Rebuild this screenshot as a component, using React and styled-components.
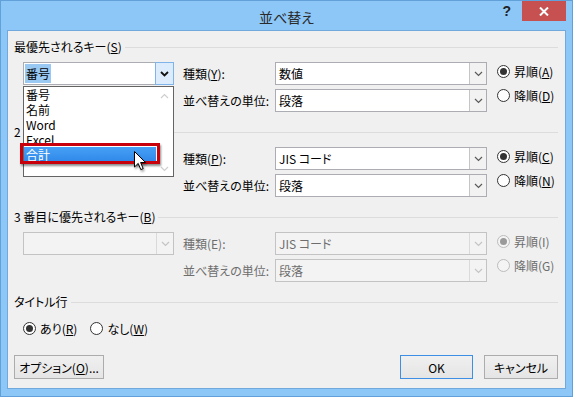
import React from 'react';
import styled, { createGlobalStyle } from 'styled-components';

const GlobalStyle = createGlobalStyle`
    html, body {
        margin: 0;
        padding: 0;
        background: #ffffff;
    }
    body {
        font-family: "Noto Sans CJK JP", "Noto Sans", sans-serif;
        font-feature-settings: "palt";
        color: #000;
    }
`;

const Chevron = ({ color = '#444', up = false, width = 1.4 }) => (
    <svg width="9" height="6" viewBox="0 0 9 6">
        <path
            d={up ? 'M1 5 L4.5 1.5 L8 5' : 'M1 1 L4.5 4.5 L8 1'}
            fill="none"
            stroke={color}
            strokeWidth={width}
        />
    </svg>
);

const Cursor = () => (
    <svg width="14" height="21" viewBox="0 0 14 21">
        <path
            d="M0.5 0.5 L0.5 16 L4.2 12.4 L6.8 18.6 L9.2 17.6 L6.6 11.5 L11.5 11.5 Z"
            fill="#fff"
            stroke="#000"
            strokeWidth="1"
            strokeLinejoin="round"
        />
    </svg>
);

function ComboBox({ value, disabled, open, selected, col, row, children }) {
    return (
        <ComboWrap $col={col} $row={row}>
            <Combo $disabled={disabled} $open={open}>
                <ComboValue $disabled={disabled} $open={open}>
                    {selected ? <Selection>{value}</Selection> : value}
                </ComboValue>
                <DropButton $disabled={disabled} $open={open}>
                    <Chevron
                        color={disabled ? '#c4c4c4' : open ? '#111' : '#5a5a5a'}
                        width={open ? 1.8 : 1.2}
                    />
                </DropButton>
            </Combo>
            {children}
        </ComboWrap>
    );
}

function Radio({ checked, disabled, children }) {
    return (
        <RadioItem $disabled={disabled}>
            <RadioCircle $disabled={disabled}>
                {checked && <RadioDot $disabled={disabled} />}
            </RadioCircle>
            <span>{children}</span>
        </RadioItem>
    );
}

function KeyGroup({ title, kind, unit, keyValue, asc, desc, disabled, list }) {
    return (
        <Group>
            <GroupHeader>{title}</GroupHeader>
            <KeyGrid>
                <ComboBox
                    col={1}
                    row={1}
                    value={keyValue}
                    disabled={disabled}
                    open={!!list}
                    selected={!!list}
                >
                    {list}
                </ComboBox>
                <FieldLabel $disabled={disabled}>{kind.label}</FieldLabel>
                <ComboBox col={3} row={1} value={kind.value} disabled={disabled} />
                <RadioStack>
                    <Radio checked disabled={disabled}>{asc}</Radio>
                    <Radio disabled={disabled}>{desc}</Radio>
                </RadioStack>
                <FieldLabel $disabled={disabled} $row2>並べ替えの単位:</FieldLabel>
                <ComboBox col={3} row={2} value={unit} disabled={disabled} />
            </KeyGrid>
        </Group>
    );
}

const fields = ['番号', '名前', 'Word', 'Excel', '合計'];

function FieldList() {
    return (
        <ListBox>
            <ListItems>
                {fields.map((f) => (
                    <ListItem key={f} $active={f === '合計'}>{f}</ListItem>
                ))}
            </ListItems>
            <ScrollColumn>
                <Chevron up color="#cfcfcf" width={1.2} />
                <Chevron color="#cfcfcf" width={1.2} />
            </ScrollColumn>
            <CursorSpot>
                <Cursor />
            </CursorSpot>
        </ListBox>
    );
}

export default function App() {
    return (
        <>
            <GlobalStyle />
            <Window>
                <TitleBar>
                    <Title>並べ替え</Title>
                    <Controls>
                        <Help>?</Help>
                        <CloseButton>
                            <svg width="10" height="9" viewBox="0 0 10 9">
                                <path d="M1 0.5 L9 8.5 M9 0.5 L1 8.5" stroke="#fff" strokeWidth="2" />
                            </svg>
                        </CloseButton>
                    </Controls>
                </TitleBar>
                <Client>
                    <KeyGroup
                        title={<span>最優先されるキー(<u>S</u>)</span>}
                        keyValue="番号"
                        kind={{ label: <span>種類(<u>Y</u>):</span>, value: '数値' }}
                        unit="段落"
                        asc={<>昇順(<u>A</u>)</>}
                        desc={<>降順(<u>D</u>)</>}
                        list={<FieldList />}
                    />
                    <KeyGroup
                        title={<span>2 番目に優先されるキー(<u>T</u>)</span>}
                        keyValue=""
                        kind={{ label: <span>種類(<u>P</u>):</span>, value: 'JIS コード' }}
                        unit="段落"
                        asc={<>昇順(<u>C</u>)</>}
                        desc={<>降順(<u>N</u>)</>}
                    />
                    <KeyGroup
                        title={<span>3 番目に優先されるキー(<u>B</u>)</span>}
                        keyValue=""
                        kind={{ label: <span>種類(E):</span>, value: 'JIS コード' }}
                        unit="段落"
                        asc="昇順(I)"
                        desc="降順(G)"
                        disabled
                    />
                    <GroupHeader>タイトル行</GroupHeader>
                    <RadioRow>
                        <Radio checked>あり(<u>R</u>)</Radio>
                        <Radio>なし(<u>W</u>)</Radio>
                    </RadioRow>
                    <ButtonRow>
                        <Button $width={90}>オプション(<u>O</u>)...</Button>
                        <Spacer />
                        <Button $width={73} $default>OK</Button>
                        <Button $width={74}>キャンセル</Button>
                    </ButtonRow>
                </Client>
            </Window>
        </>
    );
}

const Window = styled.div`
    width: 573px;
    height: 397px;
    box-sizing: border-box;
    border: 1px solid #62a0da;
    background: #8cc7f7;
    display: flex;
    flex-direction: column;
`;

const TitleBar = styled.div`
    height: 29px;
    display: grid;
    grid-template-columns: 1fr auto 1fr;
    flex-shrink: 0;
`;

const Title = styled.div`
    grid-column: 2;
    font-size: 14px;
    line-height: 26px;
    padding-top: 3px;
    color: #2b2b2b;
`;

const Controls = styled.div`
    grid-column: 3;
    justify-self: end;
    display: flex;
    align-items: flex-start;
    margin-right: 6px;
`;

const Help = styled.div`
    font-family: "Liberation Sans", sans-serif;
    font-weight: bold;
    font-size: 14px;
    line-height: 20px;
    color: #222;
    margin-right: 11px;
`;

const CloseButton = styled.div`
    width: 44px;
    height: 20px;
    background: #c75050;
    display: flex;
    align-items: center;
    justify-content: center;
`;

const Client = styled.div`
    flex: 1;
    margin: 0 6px 7px;
    box-sizing: border-box;
    background: #f0f0f0;
    border: 1px solid #72a9dc;
    padding: 8px 7px 9px 6px;
    display: flex;
    flex-direction: column;
    font-size: 12px;
`;

const Group = styled.div`
    margin-bottom: 12px;
`;

const GroupHeader = styled.div`
    display: flex;
    align-items: center;
    gap: 3px;
    height: 16px;
    line-height: 16px;
    font-size: 12px;
    white-space: nowrap;
    &::after {
        content: '';
        flex: 1;
        height: 1px;
        background: #dcdcdc;
    }
`;

const KeyGrid = styled.div`
    margin-top: 7px;
    padding-left: 9px;
    display: grid;
    grid-template-columns: 151px 101px 212px 1fr;
    grid-template-rows: 23px 23px;
    row-gap: 4px;
`;

const ComboWrap = styled.div`
    position: relative;
    grid-column: ${(p) => p.$col};
    grid-row: ${(p) => p.$row};
`;

const Combo = styled.div`
    height: 23px;
    box-sizing: border-box;
    border: 1px solid ${(p) => (p.$disabled ? '#c3c3c3' : '#abadb3')};
    background: ${(p) => (p.$disabled ? '#f3f3f3' : '#ffffff')};
    display: flex;
`;

const ComboValue = styled.div`
    flex: 1;
    padding-left: ${(p) => (p.$open ? '1px' : '3px')};
    line-height: 21px;
    white-space: nowrap;
    color: ${(p) => (p.$disabled ? '#6d6d6d' : '#000')};
`;

const Selection = styled.span`
    background: #99c9f3;
    padding: 1px 1px;
`;

const DropButton = styled.div`
    width: 17px;
    box-sizing: border-box;
    display: flex;
    align-items: center;
    justify-content: center;
    border-left: 1px solid ${(p) => (p.$disabled ? '#dadada' : '#c5c5c5')};
    background: ${(p) => (p.$disabled ? '#f3f3f3' : '#f2f2f2')};
    ${(p) =>
        p.$open &&
        `
        width: 19px;
        margin: -1px -1px -1px 0;
        border: 1px solid #7eb4ea;
        background: #dcecfc;
    `}
`;

const FieldLabel = styled.div`
    grid-column: 2;
    grid-row: ${(p) => (p.$row2 ? 2 : 1)};
    padding-left: 9px;
    line-height: 23px;
    white-space: nowrap;
    color: ${(p) => (p.$disabled ? '#6d6d6d' : '#000')};
`;

const RadioStack = styled.div`
    grid-column: 4;
    grid-row: 1 / span 2;
    padding-left: 10px;
    margin-top: -1px;
    display: flex;
    flex-direction: column;
    gap: 4px;
`;

const RadioItem = styled.div`
    display: flex;
    align-items: center;
    gap: 4px;
    height: 20px;
    white-space: nowrap;
    color: ${(p) => (p.$disabled ? '#6d6d6d' : '#000')};
`;

const RadioCircle = styled.div`
    width: 13px;
    height: 13px;
    box-sizing: border-box;
    border-radius: 50%;
    border: 1px solid ${(p) => (p.$disabled ? '#bcbcbc' : '#333333')};
    background: ${(p) => (p.$disabled ? '#f4f4f4' : '#ffffff')};
    display: flex;
    align-items: center;
    justify-content: center;
    flex-shrink: 0;
`;

const RadioDot = styled.div`
    width: 7px;
    height: 7px;
    border-radius: 50%;
    background: ${(p) => (p.$disabled ? '#9a9a9a' : '#333333')};
`;

const RadioRow = styled.div`
    display: flex;
    gap: 13px;
    padding-left: 9px;
    margin-top: 8px;
`;

const ButtonRow = styled.div`
    margin-top: auto;
    display: flex;
    gap: 11px;
`;

const Spacer = styled.div`
    flex: 1;
`;

const Button = styled.div`
    width: ${(p) => p.$width}px;
    height: 24px;
    box-sizing: border-box;
    border: 1px solid ${(p) => (p.$default ? '#3c8fe4' : '#acacac')};
    background: linear-gradient(#f0f0f0, #e5e5e5);
    display: flex;
    align-items: center;
    justify-content: center;
    white-space: nowrap;
`;

const ListBox = styled.div`
    position: absolute;
    top: calc(100% + 1px);
    left: 0;
    width: 151px;
    height: 91px;
    box-sizing: border-box;
    border: 1px solid #646464;
    background: #ffffff;
    display: flex;
    z-index: 10;
`;

const ListItems = styled.div`
    flex: 1;
    display: flex;
    flex-direction: column;
`;

const ListItem = styled.div`
    position: relative;
    height: 15px;
    line-height: 15px;
    padding-left: 2px;
    white-space: nowrap;
    ${(p) =>
        p.$active &&
        `
        background: linear-gradient(#47a0f5, #2f88e8);
        color: #ffffff;
        &::after {
            content: '';
            position: absolute;
            left: -4px;
            right: -4px;
            top: -4px;
            bottom: -2px;
            border: 3px solid #c8000b;
            box-shadow: 1px 2px 2px rgba(0, 0, 0, 0.45);
        }
    `}
`;

const ScrollColumn = styled.div`
    width: 17px;
    display: flex;
    flex-direction: column;
    align-items: center;
    justify-content: space-between;
    padding: 6px 0 4px;
`;

const CursorSpot = styled.div`
    position: absolute;
    left: 110px;
    top: 64px;
    filter: drop-shadow(1px 2px 1px rgba(0, 0, 0, 0.35));
    line-height: 0;
`;
